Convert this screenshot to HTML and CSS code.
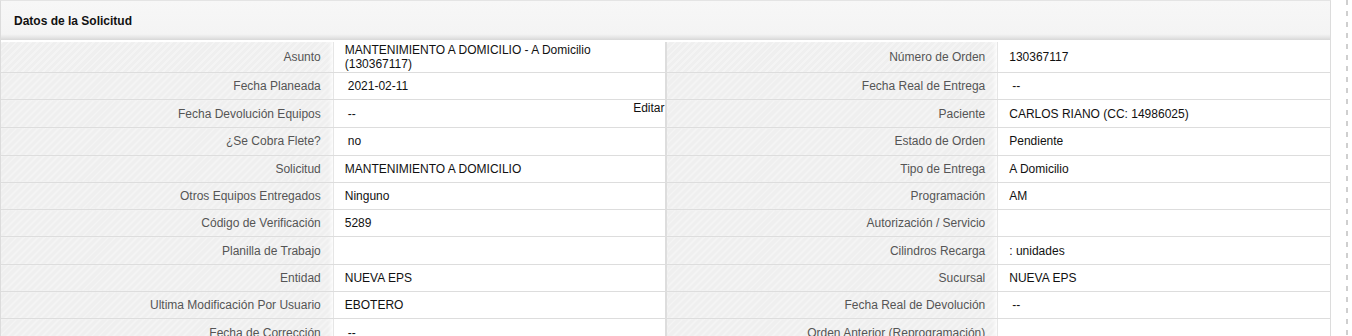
FILE: index.html
```html
<!DOCTYPE html>
<html lang="es">
<head>
    <meta charset="UTF-8">
    <title>Datos de la Solicitud</title>
    <link rel="stylesheet" href="styles.css">
</head>
<body>
    <div class="page">
        <div class="panel">
            <div class="panel-header">Datos de la Solicitud</div>
            <table class="details">
                <colgroup>
                    <col class="col"><col class="col"><col class="col"><col class="col">
                </colgroup>
                <tr>
                    <td class="label">Asunto</td>
                    <td class="value">MANTENIMIENTO A DOMICILIO - A Domicilio<br>(130367117)</td>
                    <td class="label">Número de Orden</td>
                    <td class="value">130367117</td>
                </tr>
                <tr>
                    <td class="label">Fecha Planeada</td>
                    <td class="value pad">2021-02-11</td>
                    <td class="label">Fecha Real de Entrega</td>
                    <td class="value pad">--</td>
                </tr>
                <tr>
                    <td class="label">Fecha Devolución Equipos</td>
                    <td class="value edit-cell">
                        <div class="edit-wrap">
                            <span class="edit-value">--</span>
                            <span class="edit-link">Editar</span>
                        </div>
                    </td>
                    <td class="label">Paciente</td>
                    <td class="value">CARLOS RIANO (CC: 14986025)</td>
                </tr>
                <tr>
                    <td class="label">¿Se Cobra Flete?</td>
                    <td class="value pad">no</td>
                    <td class="label">Estado de Orden</td>
                    <td class="value">Pendiente</td>
                </tr>
                <tr>
                    <td class="label">Solicitud</td>
                    <td class="value">MANTENIMIENTO A DOMICILIO</td>
                    <td class="label">Tipo de Entrega</td>
                    <td class="value">A Domicilio</td>
                </tr>
                <tr>
                    <td class="label">Otros Equipos Entregados</td>
                    <td class="value">Ninguno</td>
                    <td class="label">Programación</td>
                    <td class="value">AM</td>
                </tr>
                <tr>
                    <td class="label">Código de Verificación</td>
                    <td class="value">5289</td>
                    <td class="label">Autorización / Servicio</td>
                    <td class="value"></td>
                </tr>
                <tr>
                    <td class="label">Planilla de Trabajo</td>
                    <td class="value"></td>
                    <td class="label">Cilindros Recarga</td>
                    <td class="value">: unidades</td>
                </tr>
                <tr>
                    <td class="label">Entidad</td>
                    <td class="value">NUEVA EPS</td>
                    <td class="label">Sucursal</td>
                    <td class="value">NUEVA EPS</td>
                </tr>
                <tr>
                    <td class="label">Ultima Modificación Por Usuario</td>
                    <td class="value">EBOTERO</td>
                    <td class="label">Fecha Real de Devolución</td>
                    <td class="value pad">--</td>
                </tr>
                <tr>
                    <td class="label">Fecha de Corrección</td>
                    <td class="value pad">--</td>
                    <td class="label">Orden Anterior (Reprogramación)</td>
                    <td class="value"></td>
                </tr>
            </table>
        </div>
        <div class="dash-line"></div>
    </div>
</body>
</html>
```

FILE: styles.css
```css
body {
    margin: 0;
    font-family: "Liberation Sans", Arial, sans-serif;
    font-size: 12px;
    color: #111;
    background: #fff;
}
.page {
    display: flex;
    align-items: stretch;
    gap: 15px;
}
.panel {
    width: 1329px;
    border-left: 1px solid #dcdcdc;
    border-right: 1px solid #dcdcdc;
    border-top: 1px solid #e4e4e4;
}
.panel-header {
    height: 39px;
    line-height: 40px;
    padding-left: 13px;
    font-weight: bold;
    color: #111;
    background: linear-gradient(to bottom, #f7f7f7 0, #f4f4f4 85%, #e6e6e6 93%, #d8d8d8 100%);
}
.details {
    width: 100%;
    margin-top: 2px;
    border-collapse: collapse;
    table-layout: fixed;
}
.col {
    width: 25%;
}
.details td {
    height: 24.3px;
    padding: 1px 12px;
    line-height: 14px;
    vertical-align: middle;
    border-bottom: 1px solid #dddddd;
}
.label {
    text-align: right;
    color: #555;
    background-color: #efefef;
    background-image: repeating-linear-gradient(135deg, rgba(255,255,255,0.3) 0 2px, rgba(0,0,0,0) 2px 5px);
    box-shadow: inset -4px 0 4px -2px rgba(255,255,255,0.9);
    border-right: 1px solid #e6e6e6;
}
.label + .value {
    padding-left: 11px;
}
.value {
    background: #fff;
    color: #111;
}
.details td.pad {
    padding-left: 14px;
}
.details td:nth-child(2) {
    border-right: 2px solid #dddddd;
}
.details td.edit-cell {
    vertical-align: top;
    padding-right: 0;
    padding-left: 14px;
}
.edit-wrap {
    display: flex;
    justify-content: space-between;
    min-height: 25px;
}
.edit-value {
    align-self: center;
}
.edit-link {
    align-self: flex-start;
    color: #111;
}
.dash-line {
    width: 2px;
    background: repeating-linear-gradient(to bottom, #cfcfcf 0 5px, rgba(0,0,0,0) 5px 11px);
}
```
